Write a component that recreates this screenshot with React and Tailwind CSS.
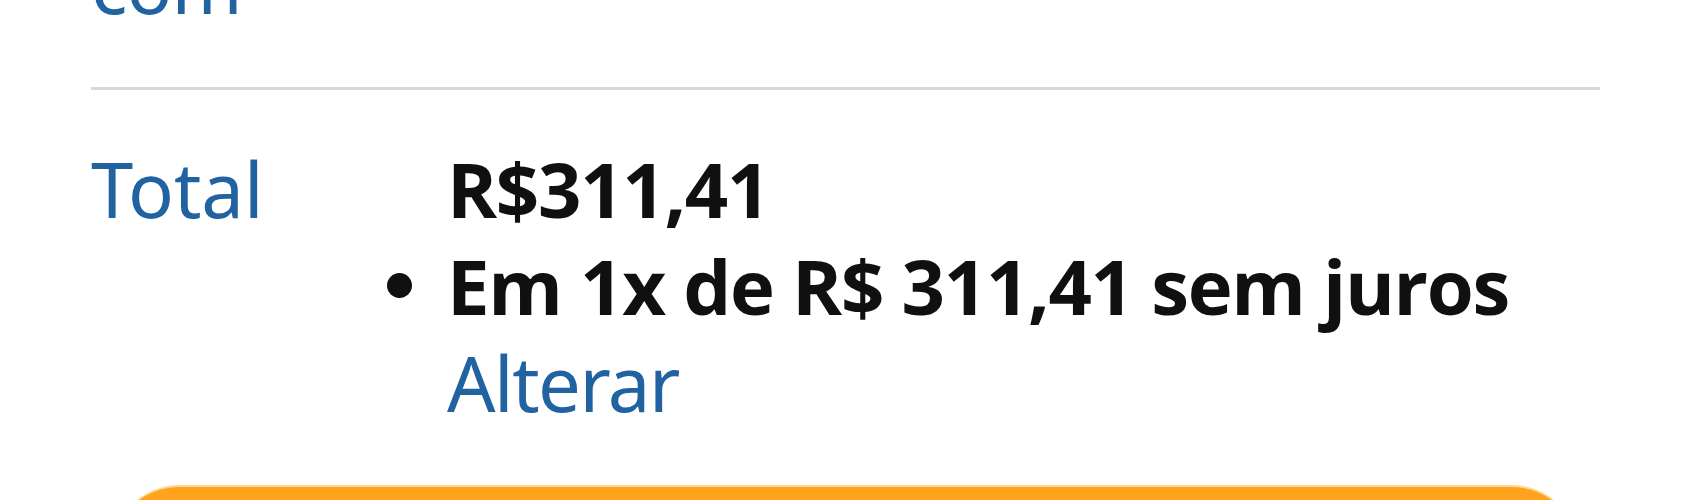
import React from 'react';

const total = {
  label: 'Total',
  amount: 'R$311,41',
  installments: 'Em 1x de R$ 311,41 sem juros',
};

const linkFont = { fontFamily: '"Noto Sans", sans-serif' };

function OrderTotal() {
  return (
    <div className="px-[91px] text-[76px] leading-[97px]" style={{ fontFamily: '"Open Sans", "Noto Sans", sans-serif' }}>
      <div className="mt-[-64px] font-[450] tracking-[-1px] text-[#2162a1]" style={linkFont}>com</div>
      <div className="mt-[54px] h-[3px] bg-[#d5d9d9]" />
      <div className="mt-[50px] flex">
        <div className="w-[356px] shrink-0 font-[450] text-[#2162a1]" style={linkFont}>
          {total.label}
        </div>
        <div className="flex flex-col text-[#0f1111]">
          <span className="font-bold tracking-[-1.3px]">{total.amount}</span>
          <div className="flex items-center font-bold tracking-[-1.3px]">
            <span className="ml-[-60px] mr-[35px] h-[25px] w-[25px] rounded-full bg-[#0f1111]" />
            <span>{total.installments}</span>
          </div>
          <a href="#" className="font-[450] tracking-[-1.5px] text-[#2162a1]" style={linkFont}>
            Alterar
          </a>
        </div>
      </div>
      <div className="mx-[20px] mt-[54px] h-[140px] rounded-[69px] border-t-[2px] border-[#ffd78f] bg-[#ffa41c]" />
    </div>
  );
}

export default function App() {
  return (
    <div className="h-[500px] w-full overflow-hidden bg-white">
      <OrderTotal />
    </div>
  );
}
